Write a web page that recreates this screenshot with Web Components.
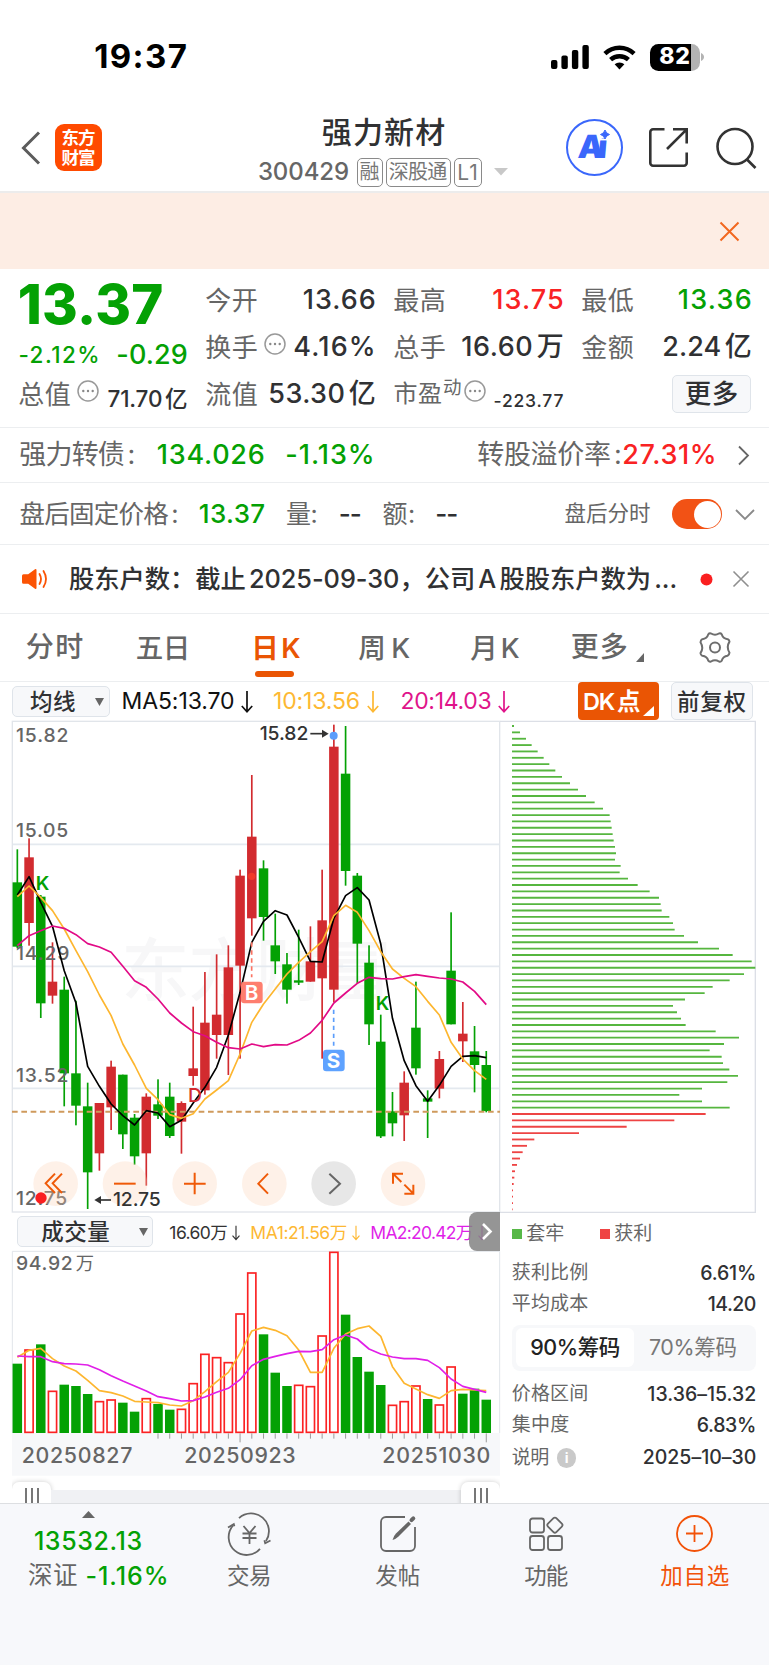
<!DOCTYPE html>
<html lang="zh-CN">
<head>
<meta charset="utf-8">
<title>强力新材 300429</title>
<style>
  :root {
    --up: #f92223;
    --down: #04a104;
    --brand: #ea5504;
    --ink: #303133;
    --muted: #666;
    --line: #eceef0;
    --panel: #f7f8fa;
    --panel-line: #dfe4ea;
    --amber: #fdb833;
    --pink: #e0148a;
  }
  body {
    margin: 0;
    width: 769px;
    height: 1665px;
    overflow: hidden;
    background: #fff;
    color: var(--ink);
    font: 500 26px/1.2 Inter, "Noto Sans CJK SC", sans-serif;
    text-autospace: normal;
  }
</style>
</head>
<body>
<stock-page></stock-page>

<script>
const BASE = `
  :host { display: flex; align-items: center; box-sizing: border-box; }
  * { box-sizing: border-box; }
  svg { display: block; flex: none; overflow: visible; }
  .push { margin-left: auto; }
  .muted { color: var(--muted); }
  .cjk { font-weight: 400; color: var(--muted); }
  .up { color: var(--up); }
  .down { color: var(--down); }
`;

/** Registers an element with static markup in an open shadow root. */
function component(name, css, html) {
  customElements.define(
    name,
    class extends HTMLElement {
      constructor() {
        super();
        this.attachShadow({ mode: "open" }).innerHTML =
          `<style>${BASE}${css}</style>${typeof html === "function" ? html(this) : html}`;
      }
    }
  );
}

/** A single line of text, tracked so that it fills the width in its "w" attribute. */
class FitText extends HTMLElement {
  constructor() {
    super();
    this.attachShadow({ mode: "open" }).innerHTML = `
      <style>
        :host { display: block; flex: none; white-space: nowrap; line-height: 1.2; }
      </style>
      <slot></slot>`;
  }

  connectedCallback() {
    const width = Number(this.getAttribute("w"));
    const size = Number(this.getAttribute("size")) || 26;
    this.style.fontSize = `${size}px`;
    this.style.width = `${width}px`;
    if (this.hasAttribute("ml")) {
      this.style.marginLeft = `${this.getAttribute("ml")}px`;
    }
    const range = document.createRange();
    range.selectNodeContents(this);
    const natural = range.getBoundingClientRect().width;
    const count = this.textContent.length - 1;
    const bearing = size * 0.025;
    this.style.textIndent = `${-bearing}px`;
    if (count > 0) {
      this.style.letterSpacing = `${(width + bearing * 2 - natural) / count}px`;
    }
  }
}
customElements.define("fit-text", FitText);

component(
  "more-dots",
  `:host { width: 22px; height: 22px; flex: none; }`,
  `<svg width="22" height="22" viewBox="0 0 22 22">
    <circle cx="11" cy="11" r="10" fill="none" stroke="#999" stroke-width="1.5"/>
    <g fill="#888"><circle cx="6.3" cy="11" r="1.2"/><circle cx="11" cy="11" r="1.2"/><circle cx="15.7" cy="11" r="1.2"/></g>
  </svg>`
);

component(
  "tool-button",
  `:host {
    justify-content: center;
    flex: none;
    border: 1.5px solid var(--panel-line);
    border-radius: 5px;
    background: var(--panel);
  }`,
  `<slot></slot>`
);

component(
  "status-bar",
  `:host { height: 114px; padding: 0 65px 0 95px; color: #000; }
  .time { font-weight: 700; }
  .icons { display: flex; align-items: center; gap: 14px; }
  .battery {
    display: flex; align-items: center; justify-content: center;
    width: 50px; height: 27px; border-radius: 8.5px;
    background: linear-gradient(90deg, #000 41px, #b3b3b3 41px);
    color: #fff; font-weight: 800;
  }`,
  `<fit-text class="time" w="91" size="33">19:37</fit-text>
  <div class="icons push">
    <svg width="38" height="24" viewBox="0 0 38 24">
      <rect y="15" width="6.4" height="9" rx="2"/><rect x="10.4" y="10.4" width="6.4" height="13.6" rx="2"/>
      <rect x="20.9" y="5" width="6.4" height="19" rx="2"/><rect x="31.4" width="6.4" height="24" rx="2"/>
    </svg>
    <svg width="33" height="25" viewBox="0 0 33 25" fill="none" stroke="#000" stroke-width="4.4">
      <path d="M1.9 8.6a21 21 0 0 1 29.2 0"/><path d="M7.6 14.7a13 13 0 0 1 17.8 0"/>
      <path d="M11.6 19.3a7.2 7.2 0 0 1 9.8 0L16.5 24.6z" fill="#000" stroke="none"/>
    </svg>
    <div style="display:flex;align-items:center;gap:1.5px">
      <div class="battery"><fit-text w="29.5" size="23">82</fit-text></div>
      <svg width="3" height="8" viewBox="0 0 3 8"><path d="M0 0C4 1.5 4 6.5 0 8z" fill="#b3b3b3"/></svg>
    </div>
  </div>`
);

component(
  "nav-bar",
  `:host { height: 79px; border-bottom: 2px solid #ececec; padding-left: 21px; align-items: flex-start; }
  .logo {
    width: 47px; height: 47px; margin: 10px 0 0 14px; border-radius: 9px; background: #ff4a00;
    color: #fff; font-weight: 600; display: grid; align-content: center; justify-content: center;
  }
  .logo fit-text { line-height: 19.5px; }
  .title { width: 260px; margin-left: 154px; display: grid; }
  .title > fit-text { margin-left: 66.5px; font-weight: 500; line-height: 36px; }
  .code { display: flex; align-items: center; margin-top: 7.5px; }
  .tag {
    display: flex; align-items: center; justify-content: center; height: 29.5px;
    border: 1.5px solid #8a8a8a; border-radius: 5px; font-weight: 400; color: #777;
  }
  .actions { display: flex; align-items: center; }
  .ai { position: relative; width: 57px; height: 57px; border: 2.7px solid #3a67fb; border-radius: 50%; color: #3a67fb; font-weight: 900; display: grid; place-content: center; }
  .ai fit-text { transform: skewX(-5deg); }
  .ai svg { position: absolute; left: 30px; top: 6px; }`,
  `<svg width="20" height="34" viewBox="0 0 20 34" style="margin-top:17px"><path d="M18 1.5 2.5 17 18 32.5" fill="none" stroke="#5c5c5c" stroke-width="3"/></svg>
  <div class="logo"><fit-text w="33" size="17.5">东方</fit-text><fit-text w="33" size="17.5">财富</fit-text></div>
  <div class="title">
    <fit-text w="122" size="30">强力新材</fit-text>
    <div class="code">
      <fit-text class="muted" ml="2.5" w="90" size="24">300429</fit-text>
      <div class="tag" style="width:26px;margin-left:8px"><fit-text w="19" size="20">融</fit-text></div>
      <div class="tag" style="width:65px;margin-left:3px"><fit-text w="57.5" size="20">深股通</fit-text></div>
      <div class="tag" style="width:28px;margin-left:3px"><fit-text w="19.5" size="21">L1</fit-text></div>
      <svg width="14" height="8" viewBox="0 0 14 8" style="margin-left:12px"><path d="M0 0h14L7 7.5z" fill="#c8c8c8"/></svg>
    </div>
  </div>
  <div class="actions" style="margin:5px 0 0 49.5px">
    <div class="ai">
      <fit-text w="31" size="32">Ai</fit-text>
      <svg width="14" height="14" viewBox="0 0 14 14"><path d="M1 2h12v9.5H1z" fill="#fff"/><path d="M7 3Q8 6.5 11.500 7.500 8 8.500 7 12 6 8.500 2.500 7.500 6 6.500 7 3z" fill="#3a67fb" stroke="#3a67fb"/></svg>
    </div>
    <svg width="39" height="39" viewBox="0 0 39 39" fill="none" stroke="#333" stroke-width="2.6" style="margin-left:26.5px">
      <path d="M15.5 1.3H4A2.7 2.7 0 0 0 1.3 4v31A2.7 2.7 0 0 0 4 37.7h31a2.7 2.7 0 0 0 2.7-2.7V24.5M24 1.3h13.7V15.5M37.200 1.800 18 21"/>
    </svg>
    <svg width="41" height="42" viewBox="0 0 41 42" fill="none" stroke="#333" stroke-width="2.6" style="margin-left:28px">
      <circle cx="19" cy="19.5" r="17.5"/><path d="M31 32.5 39.5 41"/>
    </svg>
  </div>`
);

component(
  "notice-banner",
  `:host { height: 76px; background: #fdede4; justify-content: flex-end; padding-right: 30px; }`,
  `<svg width="19" height="19" viewBox="0 0 19 19"><path d="m.5.5 18 18m0-18-18 18" stroke="#f2671f" stroke-width="2"/></svg>`
);

component(
  "quote-panel",
  `:host { display: block; height: 159px; padding: 8px 0 0 19px; border-bottom: 1.5px solid var(--line); }
  .cols { display: grid; grid-template-columns: 168px 169px 169px 169px; column-gap: 19px; }
  .col { display: grid; grid-template-rows: 47px 47px 47px; }
  .col.main { grid-template-rows: 56px 38px 47px; }
  .cell { display: flex; align-items: center; }
  .wide { font-weight: 800; }
  more-dots { margin-top: -7px; }`,
  `<div class="cols">
    <div class="col main">
      <div class="cell wide down"><fit-text w="143" size="54.5">13.37</fit-text></div>
      <div class="cell down" style="padding-top:4px"><fit-text w="80" size="22.5">-2.12%</fit-text><fit-text class="push" style="margin-top:3px" w="70" size="27">-0.29</fit-text></div>
      <div class="cell"><fit-text class="cjk" w="51" size="26">总值</fit-text><more-dots style="margin-left:7px"></more-dots><fit-text class="push" style="margin-top:7px" w="79" size="22.5">71.70亿</fit-text></div>
    </div>
    <div class="col">
      <div class="cell"><fit-text class="cjk" w="51" size="26">今开</fit-text><fit-text class="push" w="71.5" size="27">13.66</fit-text></div>
      <div class="cell"><fit-text class="cjk" w="51" size="26">换手</fit-text><more-dots style="margin-left:7px"></more-dots><fit-text class="push" w="81" size="27">4.16%</fit-text></div>
      <div class="cell"><fit-text class="cjk" w="51" size="26">流值</fit-text><fit-text class="push" w="106" size="27">53.30亿</fit-text></div>
    </div>
    <div class="col">
      <div class="cell"><fit-text class="cjk" w="51" size="26">最高</fit-text><fit-text class="push up" w="70" size="27">13.75</fit-text></div>
      <div class="cell"><fit-text class="cjk" w="51" size="26">总手</fit-text><fit-text class="push" w="101" size="27">16.60万</fit-text></div>
      <div class="cell"><fit-text class="cjk" w="47.5" size="24">市盈</fit-text><fit-text class="cjk" style="margin-top:-14px" ml="2" w="18" size="18.5">动</fit-text><more-dots style="margin-left:2px"></more-dots><fit-text class="push" style="margin-top:12px" w="69" size="17.5">-223.77</fit-text></div>
    </div>
    <div class="col">
      <div class="cell"><fit-text class="cjk" w="51" size="26">最低</fit-text><fit-text class="push down" w="72.5" size="27">13.36</fit-text></div>
      <div class="cell"><fit-text class="cjk" w="51" size="26">金额</fit-text><fit-text class="push" w="88" size="27">2.24亿</fit-text></div>
      <div class="cell"><tool-button class="push" style="width:79px;height:38.5px;margin-top:-1px"><fit-text w="52" size="26.5">更多</fit-text></tool-button></div>
    </div>
  </div>`
);

component(
  "bond-row",
  `:host { height: 55px; padding: 1px 20px 0; border-bottom: 1.5px solid var(--line); }`,
  `<fit-text class="cjk" w="114.5" size="27">强力转债:</fit-text>
  <fit-text class="down" ml="23" w="106.5" size="27">134.026</fit-text>
  <fit-text class="down" ml="22" w="88" size="27">-1.13%</fit-text>
  <fit-text class="cjk push" w="143" size="27">转股溢价率:</fit-text>
  <fit-text class="up" ml="2" w="93" size="27">27.31%</fit-text>
  <svg width="11" height="19" viewBox="0 0 11 19" style="margin-left:22px"><path d="m1 .5 9 9-9 9" fill="none" stroke="#666" stroke-width="1.8"/></svg>`
);

component(
  "after-hours-row",
  `:host { height: 62px; padding: 1px 14px 0 20px; border-bottom: 1.5px solid var(--line); }
  .toggle { width: 50px; height: 30px; border-radius: 15px; background: #f25215; padding: 1.5px; display: flex; justify-content: flex-end; margin-left: 22px; }
  .toggle i { width: 27px; height: 27px; border-radius: 50%; background: #fff; }`,
  `<fit-text class="cjk" w="158" size="25.5">盘后固定价格:</fit-text>
  <fit-text class="down" ml="21.5" w="65" size="26">13.37</fit-text>
  <fit-text class="cjk" ml="22" w="30.5" size="25">量:</fit-text>
  <fit-text ml="22.5" w="21.5" size="26">--</fit-text>
  <fit-text class="cjk" ml="22" w="31.5" size="25">额:</fit-text>
  <fit-text ml="21.5" w="21.5" size="26">--</fit-text>
  <fit-text class="cjk push" w="85" size="21.5">盘后分时</fit-text>
  <div class="toggle"><i></i></div>
  <svg width="20" height="11" viewBox="0 0 20 11" style="margin-left:13px"><path d="m1 1 9 9 9-9" fill="none" stroke="#8a8a8a" stroke-width="1.8"/></svg>`
);

component(
  "news-row",
  `:host { height: 69px; padding: 0 20px 0 22px; border-bottom: 1.5px solid var(--line); }`,
  `<svg width="26" height="22" viewBox="0 0 26 22">
    <path d="M1.5 6.2h4.7L13 1.3q1.5-.8 1.5 1v17.4q0 1.8-1.5 1l-6.8-4.9H1.5q-1.5 0-1.5-1.500V7.700q0-1.500 1.500-1.500z" fill="#fb5304"/>
    <path d="M17.5 6q3 5 0 10M21.5 3q5 8 0 16" fill="none" stroke="#fb5304" stroke-width="1.8" stroke-linecap="round"/>
  </svg>
  <fit-text ml="21.5" w="607" size="25.3">股东户数：截止2025-09-30，公司A股股东户数为...</fit-text>
  <svg class="push" width="13" height="13" viewBox="0 0 13 13"><circle cx="6.5" cy="6.5" r="6" fill="#fa1f20"/></svg>
  <svg width="16" height="16" viewBox="0 0 16 16" style="margin-left:20px"><path d="m.5.5 15 15m0-15-15 15" stroke="#8f8f8f" stroke-width="1.6"/></svg>`
);

component(
  "period-tabs",
  `:host { height: 67.5px; padding: 2px 0 0 26.5px; border-bottom: 1.5px solid var(--line); color: var(--muted); }
  .active { position: relative; color: var(--brand); font-weight: 600; }
  .active::after { content: ""; position: absolute; left: 3px; bottom: -12px; width: 39px; height: 6px; border-radius: 3px; background: var(--brand); }`,
  `<fit-text w="56" size="28">分时</fit-text>
  <fit-text ml="54" w="53" size="27.5">五日</fit-text>
  <div class="active" style="margin-left:62.5px"><fit-text w="48" size="27.5">日K</fit-text></div>
  <fit-text ml="59" w="50.5" size="27.5">周K</fit-text>
  <fit-text ml="61.5" w="48" size="27.5">月K</fit-text>
  <fit-text ml="52.5" w="55.5" size="28">更多</fit-text>
  <svg width="8" height="9" viewBox="0 0 8 9" style="margin:19px 0 0 9px"><path d="M8 0v9H0z" fill="#666"/></svg>
  <svg width="32" height="31" viewBox="-16 -15.5 32 31" fill="none" stroke="#6e6e6e" stroke-width="2" stroke-linejoin="round" style="margin:-2px 0 0 54.5px">
    <path d="M-4-14q4 2.500 8 0 1.700-.6 2.700.8Q8-8.700 12.700-8.300q1.600.8 1.800 2.400Q11-.5 14.500 5.200q-.2 2-1.800 3Q8 8.600 6.700 13.200 5.700 14.700 4 14 0 11.500-4 14q-1.700.6-2.700-.8Q-8 8.700-12.700 8.300q-1.600-.8-1.800-2.700Q-11 .5-14.500-5.200q.2-2.300 1.800-3.100Q-8-8.700-6.700-13.200-5.700-14.600-4-14z"/>
    <circle r="5"/>
  </svg>`
);

const downArrow = (color) =>
  `<svg width="12" height="22" viewBox="0 0 12 22" fill="none" stroke="${color}" stroke-width="1.7"><path d="M6 0v20.500M.8 15 6 20.800 11.200 15"/></svg>`;

component(
  "average-row",
  `:host { height: 39px; padding: 0 16.5px 0 12px; }
  .avg { display: flex; align-items: center; gap: 7px; padding-top: 2px; font-weight: 400; }
  .dk { display: flex; align-items: center; position: relative; width: 80.5px; height: 38px; margin-right: 12px; padding: 2px 0 0 5.5px; border-radius: 4px; background: var(--brand); color: #fff; font-weight: 600; }
  .dk svg { position: absolute; right: 5px; bottom: 4px; }`,
  `<tool-button style="width:97.500px;height:31px;margin-top:1px"><fit-text w="44.5" size="22.5">均线</fit-text>
    <svg width="9" height="8" viewBox="0 0 9 8" style="margin:0 -13px 0 20px"><path d="M0 0h9L4.500 8z" fill="#666"/></svg></tool-button>
  <div class="avg" style="margin-left:12.5px;color:#111"><fit-text w="112" size="23">MA5:13.70</fit-text>${downArrow("#111")}</div>
  <div class="avg" style="margin-left:20.5px;color:var(--amber)"><fit-text w="86" size="23">10:13.56</fit-text>${downArrow("#fdb833")}</div>
  <div class="avg" style="margin-left:22.5px;color:var(--pink)"><fit-text w="90" size="23">20:14.03</fit-text>${downArrow("#e0148a")}</div>
  <div class="dk push"><fit-text w="56.5" size="23.5">DK点</fit-text><svg width="11" height="10" viewBox="0 0 11 10"><path d="M11 0v10H0z" fill="#fff"/></svg></div>
  <tool-button style="width:82px;height:38px"><fit-text w="68" size="22.5">前复权</fit-text></tool-button>`
);

/* Both charts use three units to a pixel and share the same x scale. */
const STEP = 35.17;
const FIRST = 53;
const BAR = 28.5;
const xAt = (i) => FIRST + i * STEP;

const curve = (values, color) =>
  `<polyline points="${values.map((y, i) => `${xAt(i).toFixed(1)},${y}`).join(" ")}" fill="none" stroke="${color}" stroke-width="5" stroke-linejoin="round"/>`;

const label = (x, y, width, text, color = "#666", weight = 500, size = 58) =>
  `<text x="${x}" y="${y}" textLength="${width}" font-size="${size}" font-weight="${weight}" fill="${color}">${text}</text>`;

// direction, high, body top, body bottom, low
const CANDLES = [
  ["d", 401, 500, 693, 697], ["u", 368, 425, 622, 690], ["d", 538, 543, 863, 907], ["u", 680, 798, 840, 864],
  ["d", 783, 822, 1073, 1172], ["d", 855, 1073, 1170, 1229], ["d", 1101, 1172, 1370, 1480], ["u", 1162, 1162, 1313, 1365],
  ["u", 1035, 1053, 1175, 1243], ["d", 1077, 1077, 1256, 1300], ["d", 1195, 1206, 1322, 1347], ["u", 1133, 1143, 1313, 1410],
  ["d", 1091, 1166, 1200, 1210], ["d", 1101, 1143, 1261, 1267], ["u", 1157, 1162, 1218, 1314], ["u", 873, 1058, 1081, 1110],
  ["u", 769, 921, 1124, 1137], ["u", 716, 897, 958, 1029], ["u", 689, 755, 958, 1078], ["u", 462, 480, 750, 1029],
  ["u", 178, 363, 608, 660], ["d", 434, 458, 604, 675], ["d", 594, 689, 737, 775], ["d", 712, 746, 822, 864],
  ["d", 642, 794, 801, 808], ["u", 632, 737, 798, 798], ["u", 462, 614, 788, 1029], ["u", 27, 93, 822, 860],
  ["d", 31, 174, 466, 510], ["d", 472, 480, 684, 804], ["d", 689, 741, 926, 988], ["d", 897, 978, 1262, 1267],
  ["d", 1129, 1187, 1223, 1262], ["u", 1067, 1101, 1199, 1276], ["d", 798, 936, 1058, 1077], ["d", 1124, 1148, 1158, 1267],
  ["u", 1006, 1030, 1119, 1148], ["d", 590, 765, 926, 926], ["u", 859, 954, 977, 1039], ["d", 931, 1007, 1048, 1130],
  ["d", 1006, 1048, 1186, 1190],
];
const MA5 = [538, 483, 560, 632, 765, 862, 1052, 1112, 1165, 1200, 1228, 1185, 1192, 1233, 1214, 1162, 1115, 1055, 958, 830, 680, 617, 585, 598, 665, 737, 739, 608, 540, 516, 553, 685, 908, 1035, 1110, 1157, 1109, 1052, 1022, 1020, 1026];
const MA10 = [543, 511, 545, 585, 640, 705, 768, 838, 900, 985, 1048, 1118, 1152, 1197, 1208, 1194, 1150, 1123, 1095, 1015, 920, 865, 820, 775, 740, 708, 678, 600, 569, 590, 645, 708, 760, 788, 813, 857, 898, 980, 1030, 1065, 1091];
const MA20 = [690, 660, 645, 631, 638, 657, 684, 694, 710, 752, 795, 815, 850, 892, 922, 948, 960, 980, 996, 1000, 985, 993, 987, 988, 974, 952, 914, 862, 832, 803, 785, 789, 790, 783, 777, 782, 787, 790, 799, 827, 867];

component(
  "candle-chart",
  `:host { width: 488px; height: 491.5px; flex: none; }
  text { font-family: Inter, "Noto Sans CJK SC", sans-serif; }`,
  () => {
    const candles = CANDLES.map(([dir, high, top, bottom, low], i) => {
      const x = xAt(i);
      return `<g fill="${dir === "u" ? "#d22b2f" : "#04a104"}">
        <rect x="${x - 2.5}" y="${high}" width="5" height="${low - high}"/>
        <rect x="${x - BAR / 2}" y="${top}" width="${BAR}" height="${bottom - top}"/></g>`;
    }).join("");
    const controls = [
      [168, "M166-30l-28 29 28 29M187-30l-28 29 28 29"],
      [376, "M343 0h65"],
      [585, "M553 0h65M585-33v65"],
      [794, "M805-30l-29 30 29 30"],
      [1002, "M989-30l32 30-32 30"],
      [1210, "M1180 0v-30h30M1180-30l25 25M1214 30h27V3M1241 30l-27-27"],
    ].map(([x, d]) => {
      const grey = x === 1002;
      return `<circle cx="${x}" r="67" fill="${grey ? "#b0b0b0" : "#fdcfb4"}" fill-opacity=".3"/>
        <path d="${d}" fill="none" stroke="${grey ? "#666" : "#ef5a08"}" stroke-width="6"/>`;
    }).join("");
    return `<svg width="488" height="491.5" viewBox="37 16 1464 1474.5">
      ${label(365, 838, 810, "东方财富", "#f7f7f8", 500, 205)}
      <path d="M37 386h1464M37 752h1464M37 1118h1464" stroke="#e4e9ef" stroke-width="5"/>
      <rect x="38" y="17" width="1462" height="1472" fill="none" stroke="#e1e5ea" stroke-width="4"/>
      ${candles}
      <path d="M37 1188h1464" stroke="#cf9a5c" stroke-width="6" stroke-dasharray="17 11"/>
      ${label(49, 79, 157, "15.82")}${label(49, 364, 157, "15.05")}${label(49, 733, 160, "14.29")}
      ${label(49, 1100, 157, "13.52")}${label(49, 1467, 154, "12.75")}
      ${curve(MA5, "#000")}${curve(MA10, "#fdb62f")}${curve(MA20, "#e20a86")}
      ${label(108, 522, 42, "K", "#04a104", 600)}${label(1128, 882, 42, "K", "#04a104", 600)}${label(565, 1160, 42, "D", "#d22b2f", 500)}
      <path d="M756 680v105" stroke="#fb7362" stroke-width="5" stroke-dasharray="13 11"/>
      <path d="M1002 882v108" stroke="#5b9dfb" stroke-width="5" stroke-dasharray="13 11"/>
      <circle cx="756" cy="482" r="11" fill="#f23a28"/><circle cx="1002" cy="60" r="12" fill="#5b9dfb"/>
      <rect x="724" y="798" width="65" height="65" rx="10" fill="#fe7e6e"/>${label(735, 852, 43, "B", "#fff", 600, 62)}
      <rect x="970" y="1002" width="65" height="65" rx="10" fill="#5ea2ff"/>${label(981, 1057, 43, "S", "#fff", 700, 62)}
      ${label(780, 74, 146, "15.82", "#333")}
      <path d="M932 54h46" stroke="#333" stroke-width="5"/><path d="M967 42l20 12-20 12z" fill="#333"/>
      <g transform="translate(0 1404)">${controls}</g>
      <path d="M296 1453h38" stroke="#333" stroke-width="5"/><path d="M304 1441l-20 12 20 12z" fill="#333"/>
      ${label(340, 1472, 143, "12.75", "#333")}
      <circle cx="124" cy="1447" r="17" fill="#fa1f20"/>
    </svg>`;
  }
);

// right ends of the cost distribution bars, from the highest price down
const TRAPPED = [57, 75, 93, 110, 128, 146, 163, 181, 201, 225, 249, 273, 299, 324, 344, 347, 350, 353, 356, 360, 363, 360, 377, 374, 399, 428, 464, 492, 497, 500, 523, 534, 539, 567, 609, 672, 713, 770, 781, 747, 704, 653, 629, 570, 534, 546, 558, 572, 662, 732, 687, 644, 680, 684, 703, 729, 697, 621, 553, 621, 704];
const PROFIT = [632, 538, 395, 252, 118, 96, 83, 75, 66, 60, 58, 56, 54, 54, 54, 53];

component(
  "chip-chart",
  `:host { width: 256px; height: 491.5px; flex: none; }`,
  () => {
    const bars = [...TRAPPED, ...PROFIT]
      .map((end, i) => `<path d="M51 ${(31 + i * 19.083).toFixed(1)}H${end}" stroke="${i < TRAPPED.length ? "#56b63f" : "#ee4444"}"/>`)
      .join("");
    return `<svg width="256" height="491.5" viewBox="15 16 768 1474.5">
      <path d="M15 17H781V1490H15" fill="none" stroke="#dcdfe6" stroke-width="4"/>
      <g stroke-width="5.5">${bars}</g>
    </svg>`;
  }
);

const VOLUMES = "d474 u431 d416 u555 d537 d541 d565 u586 u581 d591 d618 u577 d595 d612 u609 u532 u444 u454 u469 u323 u200 d386 d501 d541 u537 u541 u389 u138 d327 d454 d498 d538 u597 u586 u539 d580 u596 u482 d564 d549 d582".split(" ");
const VMA1 = [455, 434, 428, 459, 481, 496, 524, 555, 561, 571, 587, 589, 591, 598, 601, 585, 558, 528, 500, 443, 376, 365, 374, 390, 433, 500, 500, 428, 385, 369, 361, 392, 483, 533, 550, 567, 578, 555, 551, 553, 555];
const VMA2 = [451, 453, 453, 468, 474, 475, 478, 492, 510, 526, 541, 556, 573, 579, 586, 585, 574, 560, 548, 522, 480, 461, 452, 444, 437, 438, 432, 402, 388, 400, 430, 445, 454, 459, 459, 464, 486, 520, 542, 551, 560];

component(
  "volume-header",
  `:host { position: relative; height: 39px; padding-left: 4.5px; font-weight: 400; text-autospace: no-autospace; }
  .avg { display: flex; align-items: center; gap: 5px; padding-top: 2px; }
  .avg svg { width: 8px; height: 16px; }
  .next { position: absolute; right: 0; top: 0; width: 31px; height: 39px; border-radius: 8px 0 0 8px; background: rgba(130, 130, 130, .85); display: grid; place-content: center; }`,
  `<tool-button style="width:136.500px;height:30.500px;font-weight:500"><fit-text ml="13" w="67.5" size="22.5">成交量</fit-text>
    <svg width="9" height="8" viewBox="0 0 9 8" style="margin:0 -7px 0 30px"><path d="M0 0h9L4.500 8z" fill="#666"/></svg></tool-button>
  <div class="avg" style="margin-left:16.5px;color:#333"><fit-text w="57.5" size="17.5">16.60万</fit-text>${downArrow("#333")}</div>
  <div class="avg" style="margin-left:10.5px;color:var(--amber)"><fit-text w="96" size="17.5">MA1:21.56万</fit-text>${downArrow("#fdb833")}</div>
  <div class="avg" style="margin-left:11px;color:#e01fe8"><fit-text w="102" size="17.5">MA2:20.42万</fit-text>${downArrow("#e01fe8")}</div>
  <div class="next"><svg width="10" height="17" viewBox="0 0 10 17" style="margin-left:4px"><path d="m1 1 7.500 7.500L1 16" fill="none" stroke="#fff" stroke-width="2.6"/></svg></div>`
);

component(
  "volume-chart",
  `:host { width: 488px; height: 225px; }
  text { font-family: Inter, "Noto Sans CJK SC", sans-serif; }`,
  () => {
    const bars = VOLUMES.map((v, i) => {
      const top = Number(v.slice(1));
      const x = xAt(i) - BAR / 2;
      return v[0] === "d"
        ? `<rect x="${x}" y="${top}" width="${BAR}" height="${682 - top}" fill="#04a104"/>`
        : `<rect x="${x + 2}" y="${top + 2}" width="${BAR - 4}" height="${678 - top}" fill="#fff" stroke="#fb2223" stroke-width="5"/>`;
    }).join("");
    let ticks = "";
    for (let i = 12; i <= 40; i++) {
      ticks += `M${xAt(i).toFixed(1)} 683v${i === 19 || i === 40 ? 27 : 16}`;
    }
    return `<svg width="488" height="225" viewBox="37 136 1464 675">
      <rect x="37" y="682" width="1464" height="128" fill="#f7f8fa"/>
      <path d="M38 682V137H1500V682" fill="none" stroke="#e1e5ea" stroke-width="3"/>
      ${label(49, 193, 170, "94.92")}${label(228, 193, 55, "万", "#666", 400, 55)}
      ${bars}
      ${curve(VMA1, "#fdb62f")}${curve(VMA2, "#e01fe8")}
      <path d="${ticks}" stroke="#9a9a9a" stroke-width="3"/>
      ${label(66, 773, 332, "20250827", "#666", 500, 64)}
      ${label(554, 773, 334, "20250923", "#666", 500, 64)}
      ${label(1148, 773, 324, "20251030", "#666", 500, 64)}
    </svg>`;
  }
);

component(
  "range-slider",
  `:host { height: 28px; padding-top: 6px; align-items: flex-start; overflow: hidden; }
  .track { flex: 1; height: 14px; margin-top: 8px; background: #f0f1f4; }
  .handle { display: flex; justify-content: center; gap: 4px; width: 39px; height: 30px; padding-top: 6px; border-radius: 7px; background: #fff; box-shadow: 0 0 5px rgba(0, 0, 0, .2); }
  .handle i { width: 2px; height: 20px; background: #777; }`,
  `<div class="handle"><i></i><i></i><i></i></div><div class="track"></div><div class="handle"><i></i><i></i><i></i></div>`
);

component(
  "stat-row",
  `:host { justify-content: space-between; height: 31px; }`,
  `<slot></slot>`
);

component(
  "chip-stats",
  `:host { display: block; width: 243.5px; margin-left: 12px; text-autospace: no-autospace; }
  .legend { display: flex; align-items: center; height: 44px; color: var(--muted); font-weight: 400; }
  .legend i { width: 10px; height: 10px; margin-right: 4.5px; }
  .switch { display: flex; align-items: center; height: 46.5px; margin: 4.5px 0 8px; padding: 4px; border-radius: 8px; background: var(--panel); }
  .switch div { display: grid; place-content: center; width: 118px; height: 39px; border-radius: 6px; color: #777; font-weight: 400; }
  .switch .on { background: #fff; color: #222; font-weight: 500; }
  .left { display: flex; align-items: center; gap: 8px; }
  .info { display: grid; place-content: center; width: 19.5px; height: 19.5px; border-radius: 50%; background: #c9c9c9; color: #fff; font-size: 14px; font-weight: 700; }`,
  `<div class="legend">
    <i style="background:#57b847"></i><fit-text w="37" size="19">套牢</fit-text>
    <i style="background:#ef4444;margin-left:36.5px"></i><fit-text w="37" size="19">获利</fit-text>
  </div>
  <stat-row style="margin-top:2px"><fit-text class="cjk" w="75.5" size="19">获利比例</fit-text><fit-text w="55" size="19.5">6.61%</fit-text></stat-row>
  <stat-row><fit-text class="cjk" w="75.5" size="19">平均成本</fit-text><fit-text w="47.5" size="19.5">14.20</fit-text></stat-row>
  <div class="switch">
    <div class="on"><fit-text w="89" size="21.5">90%筹码</fit-text></div>
    <div><fit-text w="87" size="21.5">70%筹码</fit-text></div>
  </div>
  <stat-row><fit-text class="cjk" w="75.5" size="19">价格区间</fit-text><fit-text w="108" size="19.5">13.36–15.32</fit-text></stat-row>
  <stat-row><fit-text class="cjk" w="56.5" size="19">集中度</fit-text><fit-text w="58.5" size="19.5">6.83%</fit-text></stat-row>
  <stat-row style="height:34px"><div class="left"><fit-text class="cjk" w="36.5" size="19">说明</fit-text><div class="info">i</div></div><fit-text w="112.5" size="19.5">2025–10–30</fit-text></stat-row>`
);

component(
  "tab-item",
  `:host { flex-direction: column; width: 148.5px; color: var(--muted); font-weight: 400; }
  .icon { display: grid; place-content: center; height: 38px; margin: 10.5px 0 9px; }`,
  `<div class="icon"><slot name="icon"></slot></div><slot></slot>`
);

component(
  "tab-bar",
  `:host { height: 162px; border-top: 1.5px solid #dddfe2; background: #f7f8fb; align-items: flex-start; }
  .index { width: 175px; padding-top: 7px; }
  .index div { display: flex; }
  tab-item svg { fill: none; stroke: #666; stroke-width: 1.8; }
  tab-item.add { color: #f25208; }
  tab-item.add svg { stroke: #f25208; }`,
  `<div class="index">
    <svg width="13" height="7" viewBox="0 0 13 7" style="margin-left:82px"><path d="M6.500 0 13 7H0z" fill="#666"/></svg>
    <div style="margin:7.5px 0 0 34.5px"><fit-text class="down" w="107" size="25">13532.13</fit-text></div>
    <div style="margin:5.5px 0 0 28.5px"><fit-text class="cjk" w="48.5" size="24.5">深证</fit-text><fit-text class="down" ml="9" w="82" size="25">-1.16%</fit-text></div>
  </div>
  <tab-item>
    <svg slot="icon" width="43" height="38" viewBox="0 0 43 38">
      <path d="M11 3.200A17.800 17.800 0 0 1 38 26M32 33.800A17.800 17.800 0 0 1 5 10.500"/>
      <path d="M0 12.500l5.800-3.300.6 2M42.500 25.500l-5.300 2.700-.8-3"/>
      <path d="m15.500 11 6 7 6-7M14.500 18.500h14M14.500 23h14M21.500 18v11"/>
    </svg>
    <fit-text w="43.5" size="22.5">交易</fit-text>
  </tab-item>
  <tab-item>
    <svg slot="icon" width="36" height="36" viewBox="0 0 36 36">
      <path d="M25 1H6A5 5 0 0 0 1 6v24a5 5 0 0 0 5 5h24a5 5 0 0 0 5-5V11"/>
      <path d="M12.500 24q1-4 3.500-6.500L28.500 5.500l2.500 2.500-12.500 12.500q-2.500 2.500-6 3.500z" fill="#666" stroke="none"/><path d="m31.500 4.200 1.800-1.800" stroke-width="4" stroke-linecap="round"/>
    </svg>
    <fit-text w="44" size="22.5">发帖</fit-text>
  </tab-item>
  <tab-item>
    <svg slot="icon" width="34" height="34" viewBox="0 0 34 34">
      <rect x="1" y="1.500" width="14" height="14" rx="2.500"/><rect x="1" y="19" width="14" height="14" rx="2.500"/><rect x="19" y="19" width="14" height="14" rx="2.500"/>
      <rect x="20" y="2.200" width="11.800" height="11.800" rx="2" transform="rotate(45 25.900 8.100)"/>
    </svg>
    <fit-text w="43" size="22.5">功能</fit-text>
  </tab-item>
  <tab-item class="add">
    <svg slot="icon" width="37" height="37" viewBox="0 0 37 37"><circle cx="18.500" cy="18.500" r="17.500"/><path d="M10 18.500h17M18.500 10v17"/></svg>
    <fit-text w="68" size="22.5">加自选</fit-text>
  </tab-item>`
);

component(
  "stock-page",
  `:host { display: flex; flex-direction: column; align-items: stretch; height: 1665px; }
  .charts { display: flex; padding-left: 12.3px; height: 491.5px; }
  .lower { display: flex; padding-left: 12.3px; height: 291px; }
  .volume { width: 488px; flex: none; }`,
  `<status-bar></status-bar>
  <nav-bar></nav-bar>
  <notice-banner></notice-banner>
  <quote-panel></quote-panel>
  <bond-row></bond-row>
  <after-hours-row></after-hours-row>
  <news-row></news-row>
  <period-tabs></period-tabs>
  <average-row></average-row>
  <div class="charts"><candle-chart></candle-chart><chip-chart></chip-chart></div>
  <div class="lower">
    <div class="volume">
      <volume-header></volume-header>
      <volume-chart></volume-chart>
      <range-slider></range-slider>
    </div>
    <chip-stats></chip-stats>
  </div>
  <tab-bar></tab-bar>`
);
</script>
</body>
</html>
